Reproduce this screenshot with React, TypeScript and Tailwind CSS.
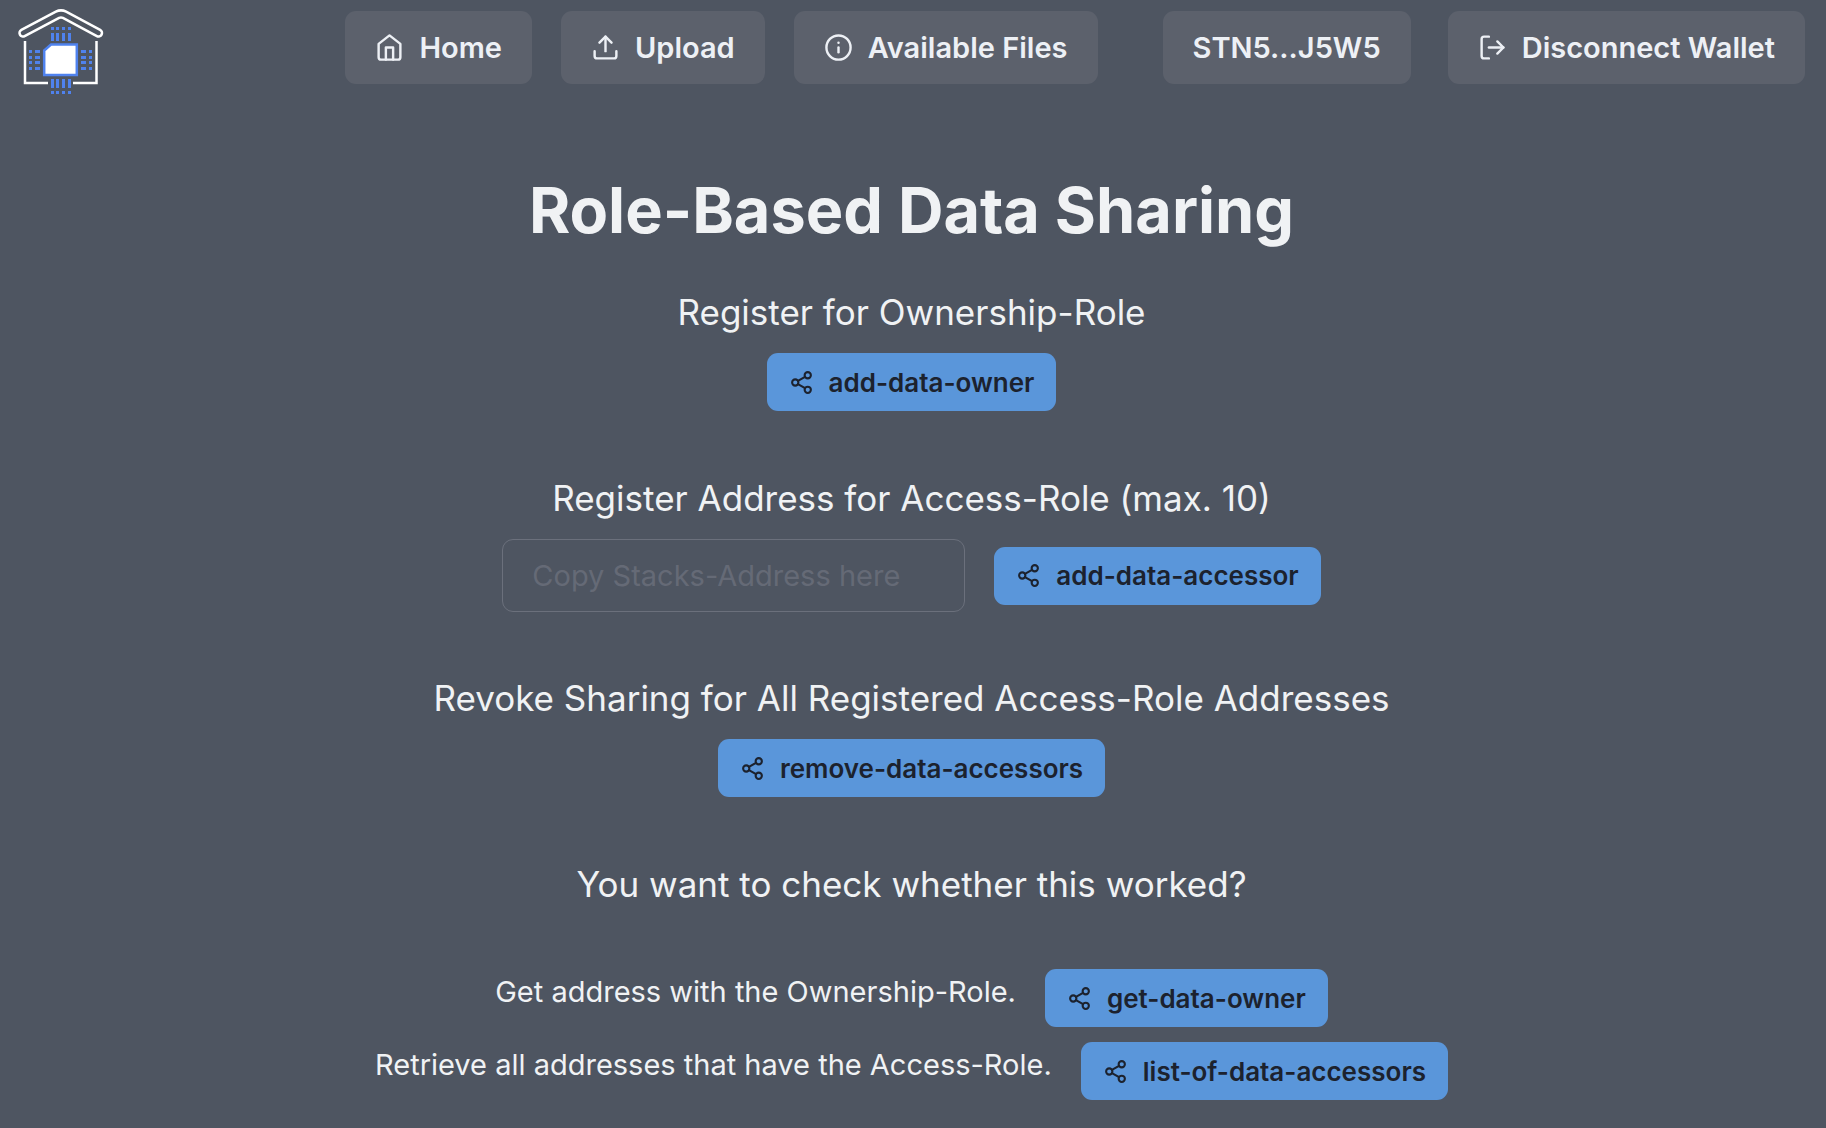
import type { ReactNode } from 'react';
import { FiHome, FiInfo, FiLogOut, FiShare2, FiUpload } from 'react-icons/fi';

function Logo() {
  const cols = [51, 56, 62, 68];
  const rows = [50, 56, 61, 67];
  const roof = 'M23 33 57.500 14.800Q61 13 64.500 14.800L98.500 33';
  return (
    <svg width="130" height="110" viewBox="0 0 130 110" fill="none" aria-hidden="true">
      <path d="M25 41V83H48M73 83H96.500V41" stroke="#fff" strokeWidth="2.500" />
      <path d={roof} stroke="#fff" strokeWidth="9.500" strokeLinecap="round" />
      <path d={roof} stroke="#4e5561" strokeWidth="4.500" strokeLinecap="round" />
      <path d="M44.200 50.500 51 44.500H76.800V75H44.200Z" fill="#fff" stroke="#4f82ee" strokeWidth="2.500" />
      <g fill="#4f82ee">
        {cols.map((x) => (
          <g key={x}>
            <rect x={x} y="27" width="3" height="3" />
            <rect x={x} y="33" width="3" height="8" />
            <rect x={x} y="79" width="3" height="9" />
            <rect x={x} y="91" width="3" height="3" />
          </g>
        ))}
        {rows.map((y) => (
          <g key={y}>
            <rect x="29" y={y} width="3" height="3" />
            <rect x="35" y={y} width="5" height="3" />
            <rect x="81" y={y} width="5" height="3" />
            <rect x="89" y={y} width="3" height="3" />
          </g>
        ))}
      </g>
    </svg>
  );
}

function NavButton({ icon, children }: { icon?: ReactNode; children: ReactNode }) {
  return (
    <button
      type="button"
      className="flex h-[73px] items-center gap-[15px] whitespace-nowrap rounded-[11px] bg-[#5c616c] px-[30px] text-[29px] font-semibold text-[#edf0f5]"
    >
      {icon}
      {children}
    </button>
  );
}

function ActionButton({ children }: { children: ReactNode }) {
  return (
    <button
      type="button"
      className="flex h-[58px] items-center gap-[15px] whitespace-nowrap rounded-[11px] bg-[#5a96da] px-[22px] text-[26px] font-semibold text-[#1c222e]"
    >
      <FiShare2 size={25} />
      {children}
    </button>
  );
}

function Section({ title, children }: { title: string; children: ReactNode }) {
  return (
    <section className="flex flex-col items-center">
      <h2 className="mb-[13px] text-[35px] leading-[55px]">{title}</h2>
      {children}
    </section>
  );
}

export default function App() {
  return (
    <div className="min-h-screen bg-[#4e5561] font-['Inter',sans-serif] text-[#f0f2f4]">
      <header className="flex h-[110px] items-start justify-between pr-[21px]">
        <a href="#" aria-label="Home page">
          <Logo />
        </a>
        <nav className="flex pt-[11px]">
          <div className="mr-[65px] flex gap-[29px]">
            <NavButton icon={<FiHome size={29} />}>Home</NavButton>
            <NavButton icon={<FiUpload size={29} />}>Upload</NavButton>
            <NavButton icon={<FiInfo size={29} />}>Available Files</NavButton>
          </div>
          <div className="flex gap-[37px]">
            <NavButton>STN5...J5W5</NavButton>
            <NavButton icon={<FiLogOut size={29} />}>Disconnect Wallet</NavButton>
          </div>
        </nav>
      </header>
      <main className="flex flex-col items-center pr-[3px] pt-[61px]">
        <h1 className="mb-[36px] text-[63px] font-bold leading-[78px]">Role-Based Data Sharing</h1>
        <div className="flex flex-col items-center">
          <Section title="Register for Ownership-Role">
            <ActionButton>add-data-owner</ActionButton>
          </Section>
          <div className="mt-[60px]">
            <Section title="Register Address for Access-Role (max. 10)">
              <form className="flex items-center gap-[29px]" onSubmit={(e) => e.preventDefault()}>
                <input
                  type="text"
                  aria-label="Stacks address"
                  placeholder="Copy Stacks-Address here"
                  className="h-[73px] w-[463px] rounded-[11px] border border-[#6b707c] bg-transparent px-[29px] text-[29px] outline-none placeholder:text-[#656a76]"
                />
                <ActionButton>add-data-accessor</ActionButton>
              </form>
            </Section>
          </div>
          <div className="mt-[59px]">
            <Section title="Revoke Sharing for All Registered Access-Role Addresses">
              <ActionButton>remove-data-accessors</ActionButton>
            </Section>
          </div>
          <h2 className="mb-[57px] mt-[60px] text-[35px] leading-[55px]">You want to check whether this worked?</h2>
          <div className="flex flex-col items-center gap-[15px]">
            <div className="flex gap-[29px]">
              <p className="text-[29px] leading-[46px]">Get address with the Ownership-Role.</p>
              <ActionButton>get-data-owner</ActionButton>
            </div>
            <div className="flex gap-[29px]">
              <p className="text-[29px] leading-[46px]">Retrieve all addresses that have the Access-Role.</p>
              <ActionButton>list-of-data-accessors</ActionButton>
            </div>
          </div>
        </div>
      </main>
    </div>
  );
}
